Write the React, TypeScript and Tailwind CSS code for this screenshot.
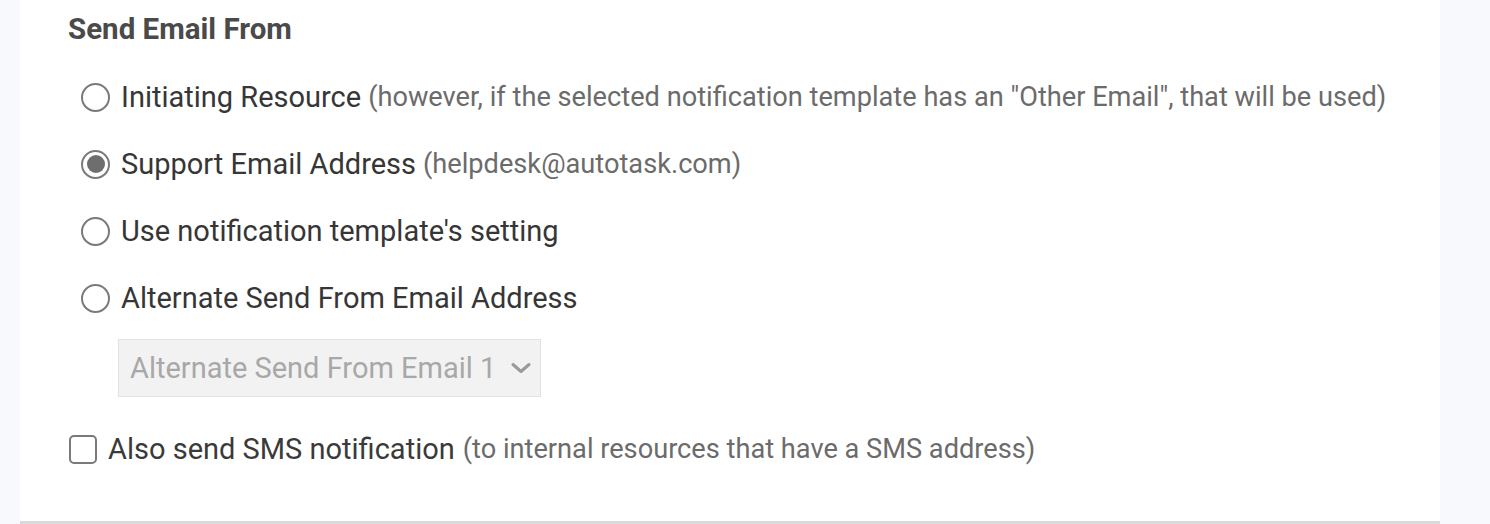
import React from "react";

function Radio({ checked }: { checked?: boolean }) {
  return (
    <span className="flex h-[29px] w-[29px] shrink-0 items-center justify-center rounded-full border-[2.5px] border-[#7a7a7a] bg-white">
      {checked ? <span className="block h-[18px] w-[18px] rounded-full bg-[#6e6e6e]" /> : null}
    </span>
  );
}

function RadioRow({ label, note, checked }: { label: string; note?: string; checked?: boolean }) {
  return (
    <div className="flex h-[40px] items-center">
      <Radio checked={checked} />
      <span className="ml-[11px] whitespace-nowrap text-[#363636]">{label}</span>
      {note ? <span className="ml-[7px] whitespace-nowrap text-[27.2px] text-[#6b6b6b]">{note}</span> : null}
    </div>
  );
}

export default function App() {
  return (
    <div
      className="flex h-[524px] w-[1490px] bg-[#f8f9fc] text-[29px] leading-[40px]"
      style={{ fontFamily: "Roboto, 'Liberation Sans', sans-serif" }}
    >
      <div className="w-[20px] shrink-0" />
      <div className="flex h-[524px] w-[1420px] shrink-0 flex-col border-b-[3px] border-[#dadada] bg-white pl-[48px] pt-[9px]">
        <div className="h-[40px] text-[29.5px] font-bold text-[#4a4a4a]">Send Email From</div>
        <div className="ml-[13px] mt-[28px] flex flex-col gap-[27px]">
          <RadioRow
            label="Initiating Resource"
            note={'(however, if the selected notification template has an "Other Email", that will be used)'}
          />
          <RadioRow label="Support Email Address" note="(helpdesk@autotask.com)" checked />
          <RadioRow label="Use notification template's setting" />
          <RadioRow label="Alternate Send From Email Address" />
        </div>
        <div className="ml-[50px] mt-[21px] flex h-[58px] w-[423px] items-center justify-between border border-[#e2e2e2] bg-[#f2f2f2] pl-[11px] pr-[9px] text-[#a8a8a8]">
          <span className="whitespace-nowrap">Alternate Send From Email 1</span>
          <svg width="20" height="12" viewBox="0 0 20 12" fill="none">
            <path d="M2 2.5 L10 9.5 L18 2.5" stroke="#9a9a9a" strokeWidth="3" strokeLinecap="round" strokeLinejoin="round" />
          </svg>
        </div>
        <div className="mt-[32px] flex h-[40px] items-center">
          <span className="ml-[1px] h-[29px] w-[28px] shrink-0 rounded-[5px] border-[2.5px] border-[#7a7a7a] bg-white" />
          <span className="ml-[11px] whitespace-nowrap text-[#3a3a3a]">Also send SMS notification</span>
          <span className="ml-[8px] whitespace-nowrap text-[27.2px] text-[#6b6b6b]">(to internal resources that have a SMS address)</span>
        </div>
      </div>
      <div className="flex-1" />
    </div>
  );
}
